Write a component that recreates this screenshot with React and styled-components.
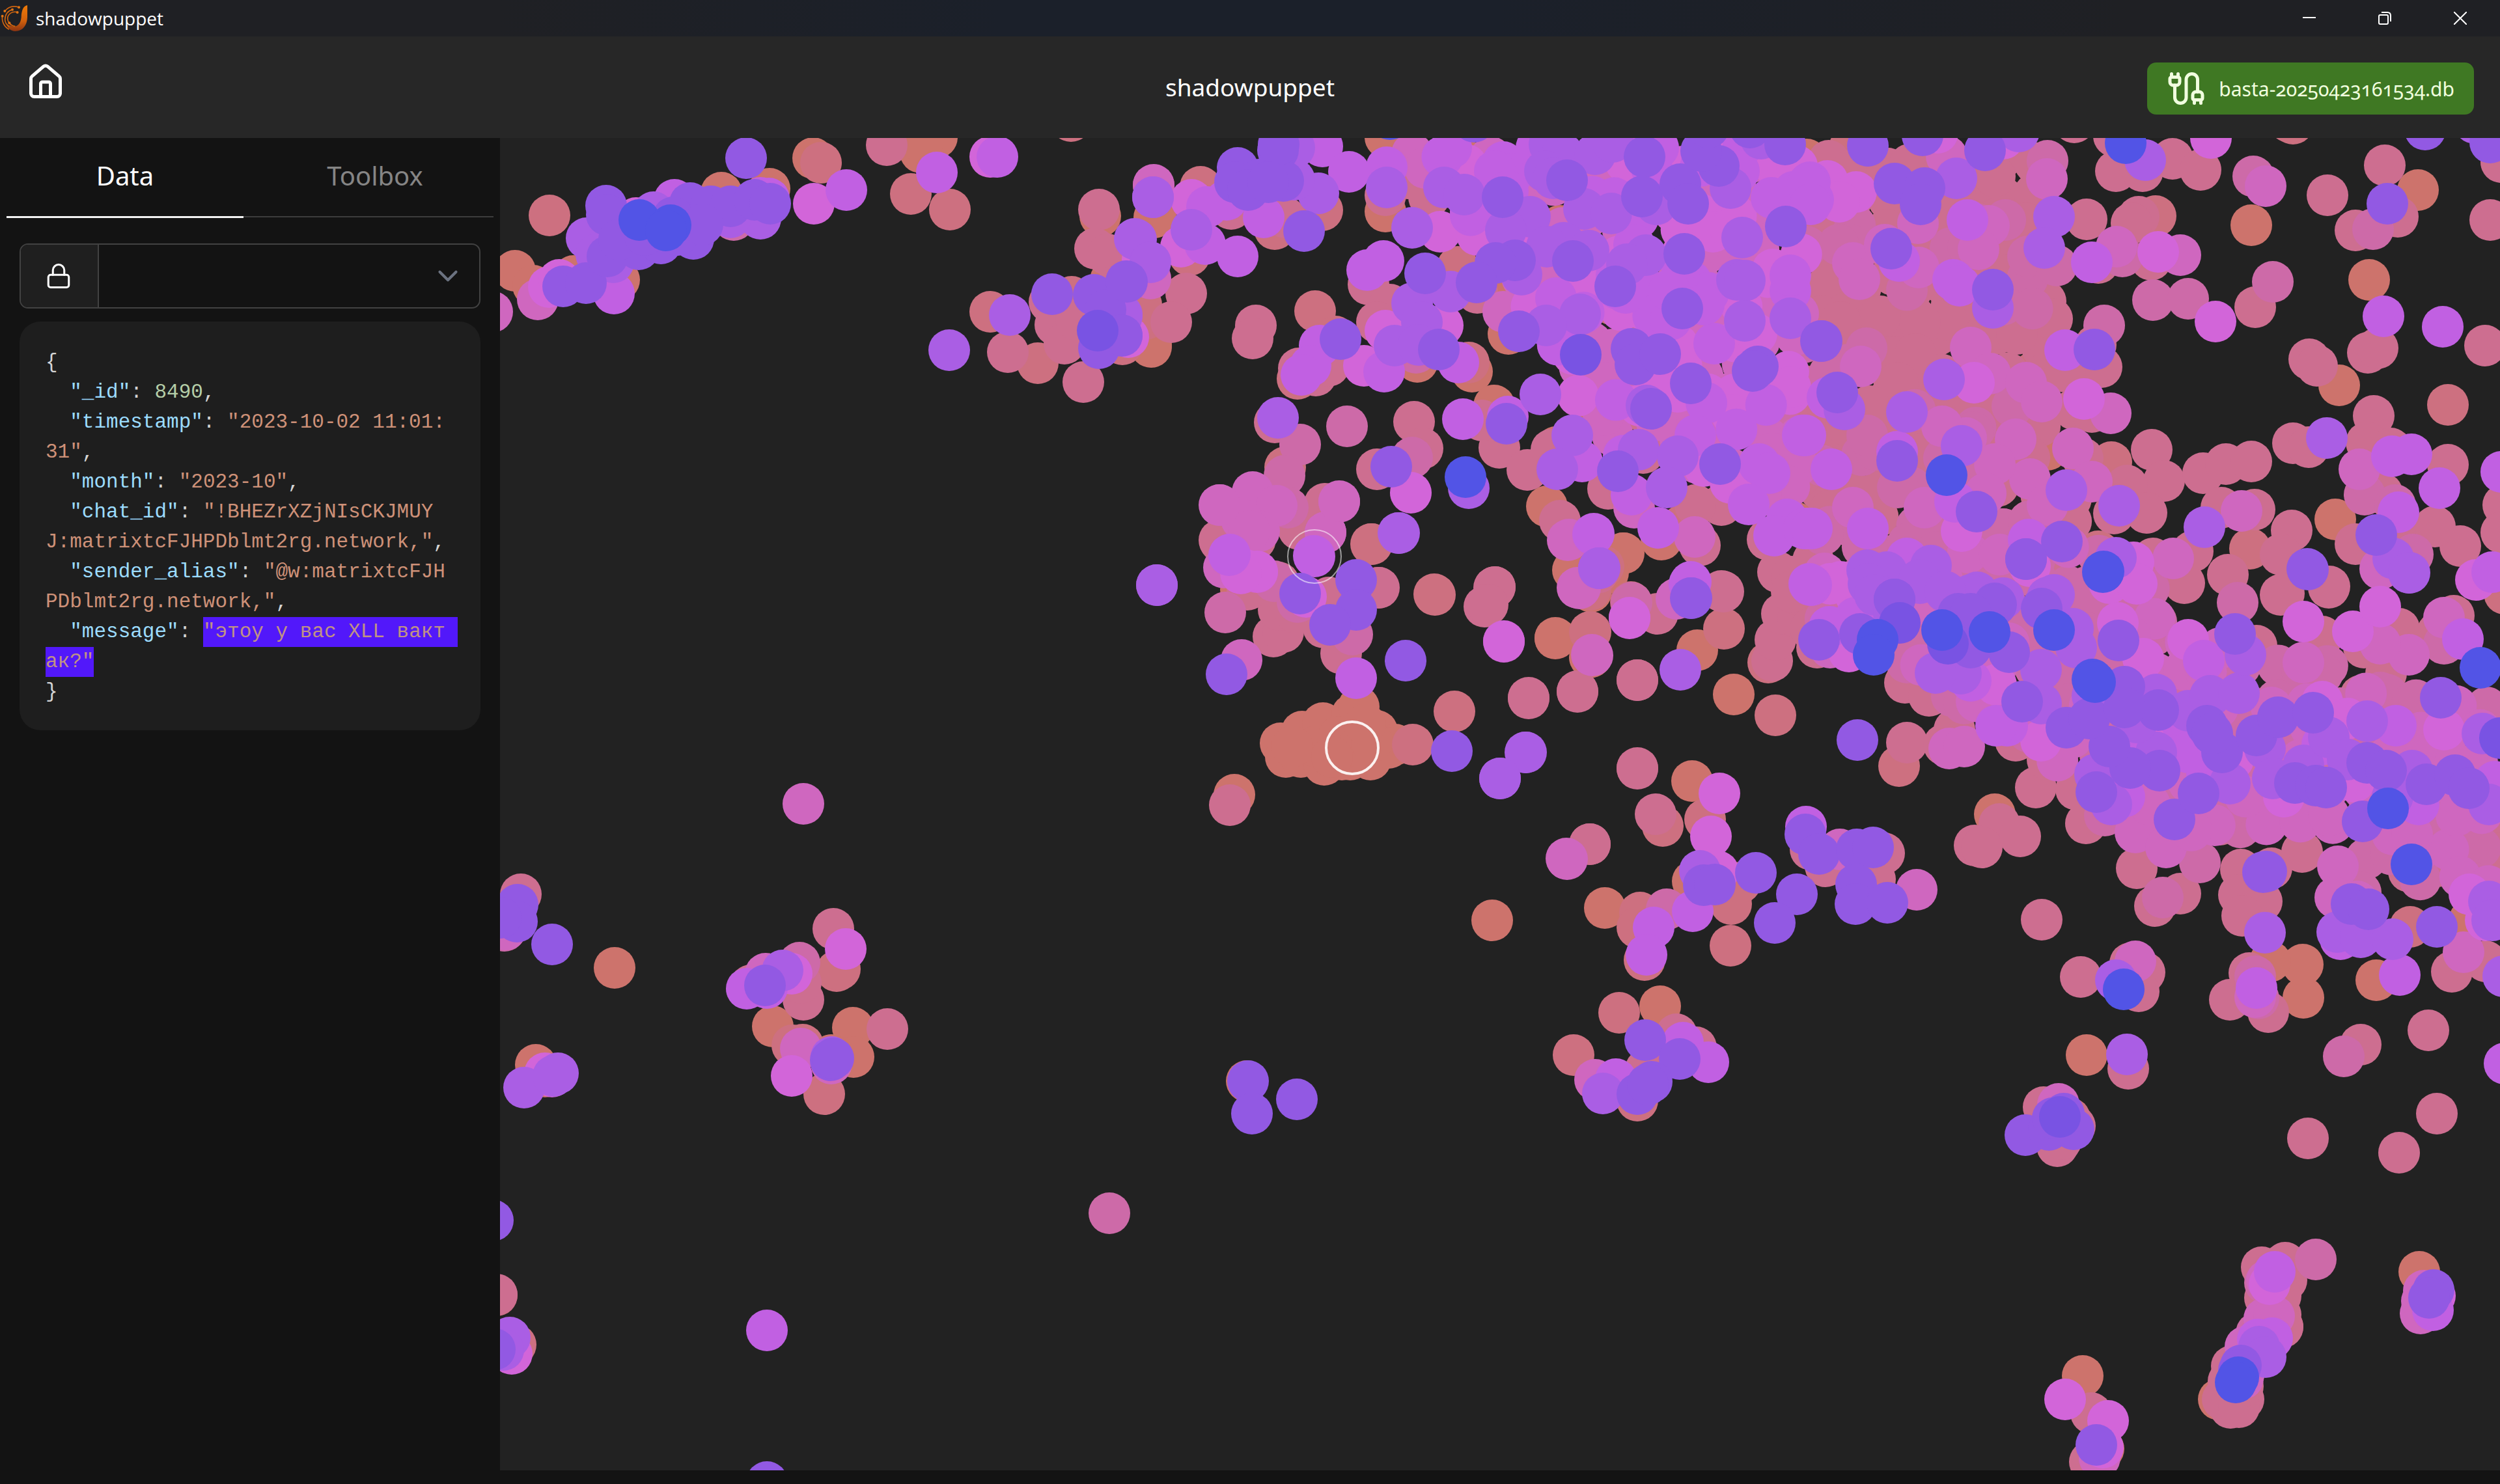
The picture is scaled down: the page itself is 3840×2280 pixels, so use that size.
import React from "react";
import styled, { createGlobalStyle } from "styled-components";
import { Cable, ChevronDown, House, Lock } from "lucide-react";

const GlobalStyle = createGlobalStyle`
  *, *::before, *::after { box-sizing: border-box; }
  html, body, #root { height: 100%; }
  body {
    margin: 0;
    background: #131313;
    color: #ffffff;
    font-family: "Noto Sans", "Open Sans", sans-serif;
  }
  button, select { font: inherit; color: inherit; }
`;

/* ---------- layout ---------- */

const Window = styled.div`
  display: flex;
  flex-direction: column;
  height: 100%;
`;

const TitleBar = styled.div`
  display: flex;
  align-items: center;
  height: 56px;
  padding-right: 3px;
  background: linear-gradient(90deg, #1f2024 20%, #1b202a 40%, #1b202a 60%, #1f2024 85%);
`;

const AppName = styled.span`
  flex: 1;
  padding-left: 10px;
  font-family: "Open Sans", "Noto Sans", sans-serif;
  font-size: 28px;
  line-height: 40px;
`;

const WindowButton = styled.button`
  display: grid;
  place-items: center;
  width: 116px;
  height: 56px;
  padding: 0;
  border: 0;
  background: none;
`;

const Header = styled.header`
  display: grid;
  grid-template-columns: 1fr auto 1fr;
  align-items: start;
  padding: 40px 40px 36px;
  background: #272727;
`;

const HomeButton = styled.button`
  display: flex;
  justify-self: start;
  padding: 0;
  border: 0;
  background: none;
`;

const Title = styled.h1`
  margin: 0;
  font-size: 37px;
  font-weight: 400;
  line-height: 76px;
`;

const DatabaseButton = styled.button`
  display: flex;
  align-items: center;
  justify-self: end;
  gap: 20px;
  height: 80px;
  padding: 0 30px;
  border: 0;
  border-radius: 14px;
  background: #3f7823;
  color: #f1ffdf;
  font-size: 30px;
  font-variant-numeric: oldstyle-nums;
`;

const Body = styled.div`
  display: flex;
  flex: 1;
  min-height: 0;
  padding-bottom: 21px;
`;

const Sidebar = styled.aside`
  flex: none;
  width: 768px;
  background: #131313;
`;

const TabList = styled.div`
  display: flex;
  gap: 20px;
  margin: 0 10px;
  border-bottom: 2px solid #3d3d3d;
`;

const Tab = styled.button`
  flex: 1;
  height: 123px;
  margin-bottom: -3px;
  padding: 0 0 6px;
  border: 0;
  border-bottom: 3px solid ${(p) => (p.$active ? "#f4f4f4" : "transparent")};
  background: none;
  color: ${(p) => (p.$active ? "#ffffff" : "#858585")};
  font-size: 40px;
`;

const TabPanel = styled.div`
  display: flex;
  flex-direction: column;
  gap: 20px;
  padding: 40px 30px;
`;

const FieldRow = styled.div`
  display: flex;
  height: 100px;
  border: 2px solid #424242;
  border-radius: 13px;
  overflow: hidden;
`;

const LockButton = styled.button`
  display: grid;
  place-items: center;
  width: 120px;
  padding: 0 2px 0 0;
  border: 0;
  border-right: 2px solid #424242;
  background: #1f1f1f;
`;

const SelectWrap = styled.label`
  display: grid;
  flex: 1;
  align-items: center;

  > * { grid-area: 1 / 1; }
  > svg {
    justify-self: end;
    margin-right: 23px;
    color: #6b7280;
    pointer-events: none;
  }
`;

const Select = styled.select`
  width: 100%;
  height: 100%;
  padding: 0 80px 0 24px;
  border: 0;
  background: transparent;
  appearance: none;
  font-size: 32px;
`;

const Record = styled.pre`
  margin: 0;
  padding: 40px 40px 36px;
  border-radius: 32px;
  background: #1e1e1e;
  color: #d4d4d4;
  font-family: "Liberation Mono", "DejaVu Sans Mono", monospace;
  font-size: 31px;
  line-height: 46px;
  overflow: hidden;
`;

const Key = styled.span`
  color: #9cdcfe;
`;

const NumberValue = styled.span`
  color: #b5cea8;
`;

const Text = styled.span`
  color: #ce9178;
`;

const MarkedText = styled.mark`
  display: inline-block;
  color: #c09384;
  background: #5218fa;
`;

const Plot = styled.main`
  flex: 1;
  min-width: 0;
  background: #222222;

  svg {
    display: block;
    width: 100%;
    height: 100%;
  }
`;

/* ---------- scatter data ---------- */

const LEVELS = [
  "#cd736c", "#cd7080", "#cd6e90", "#cd6aa8", "#cf67bf", "#d265d9",
  "#c160e2", "#aa5ee4", "#9259e3", "#7953e3", "#5254e6",
];

// Every chunk keeps its points in local units: origin (x, y) and units per pixel (sx, sy).
// rows[n] is the flat list of "x,y" pairs at colour level n.
const CHUNKS = [
  {
    x: 760, y: 200, sx: 1.568, sy: 2.613,
    rows: [
      "49,565 767,112 545,250 662,235 1025,90 1064,30 1030,50 190,585 92,625 1458,345 1484,600 1592,340 1580,870 300,600 510,360",
      "132,343 786,130 1002,255 1096,320 1193,730 1308,935 1512,860 1390,668 1387,-37",
      "944,60 1455,320 1446,475 1475,500 1336,690 1350,780 1372,856 1400,760 1235,890 1418,1010 1500,620",
      "576,360",
      "-7,730 104,680 1587,220",
      "130,630 155,600 340,352 768,295 1193,108 1525,830 1560,520",
      "287,657 433,280 1065,170 1210,108 847,240 640,272 660,275",
      "221,435 382,330 640,355 568,350 285,530 245,500 1095,883 1240,742 1545,440 1585,270 1510,740",
      "606,113 268,304 270,340 165,627 220,613 272,508 346,478 400,455 478,436 470,293 430,350 520,306 568,306 625,280 663,296 300,440 360,420 440,420 500,380 1342,658 1443,660 1523,610 1510,825 1455,876 1470,720",
      "1452,805",
      "348,360 423,382 412,402",
    ],
  },
  {
    x: 1740, y: 200, sx: 1.493, sy: 2.24,
    rows: [
      "42,740 580,280 653,797 778,830 862,700 828,948 950,1295 1125,1457 1213,1410 1010,1515 1070,760 1050,970 840,520 1250,700 580,25 980,330 50,300 1040,500 1545,100 970,1090 1520,1350 770,110",
      "155,195 418,622 325,340 435,275 130,430 20,600 378,855 692,1598 547,1424 745,470 770,800 1100,600 1540,880 465,710 350,1160 1230,1000 1080,1500 1180,150 1260,1360 30,650",
      "123,563 88,660 282,672 275,716 225,270 350,300 580,225 630,165 540,530 590,600 560,660 420,845 450,810 380,820 645,1003 665,1095 560,1167 841,1092 905,1170 960,1100 1090,1235 1160,960 980,1345 1350,1290 1455,1410 1480,1520 1560,1480 200,1415 280,1410 380,1370 440,1285 565,1575 830,1572 1350,1585 1530,1190 1170,1110 1290,1290 1300,1430 790,560 1500,960 680,230 1180,700 1110,930 1420,1000 800,1000 325,1005",
      "48,190 650,765 491,1020 384,1082 348,1190 640,1127 1545,400 1540,730 1130,350 1300,700 1500,1040 960,450 356,1300 1040,600",
      "640,80 670,130 850,625 1420,110 1060,190 1470,260 40,510 275,1245 200,1290 330,1293 290,1380 250,1340 474,1280 442,1385 1100,1050 1085,870 1000,1410 1288,1400 1020,1575 1150,1300 1200,1000 1400,640 1500,120 1350,1000 215,1500 1440,1250 1080,980",
      "110,400 135,240 705,350 790,360 1130,110 1170,615 1280,350 1330,350 1370,340 1468,480 1508,885 1380,910 1375,980 580,690 710,672 530,810 1021,915 637,1248 260,1515 285,1520 1010,770 1430,700 1250,740 1310,1155 1370,1215 1515,225 1250,900 1150,60 1240,280 1200,900",
      "435,55 495,143 583,128 730,60 300,300 215,240 170,265 165,392 240,434 850,110 870,150 775,280 830,140 860,210 925,60 1205,60 1400,50 1552,180 1560,240 1390,140 1130,560 1110,500 970,578 575,450 537,482 428,742 407,810 387,843 577,830 746,800 757,994 1150,395 1260,480 1280,520 1230,550 1320,560 1508,553 1333,735 1316,938 1290,1050 1125,1120 1536,1050 1144,1255 1056,1390 1205,1368 1437,1150 1460,1180 1412,1288 1500,1340 1470,1395 1540,1370 1280,1555 415,1466 222,1460 1555,1565 1030,1140 1310,600 1595,920 860,985",
      "47,231 135,342 5,375 40,455 -25,640 425,218 370,60 370,170 582,197 640,337 714,197 760,222 955,50 985,80 1060,82 945,140 965,165 1035,270 1098,287 1100,40 1200,255 1370,200 1440,30 910,298 855,345 988,388 950,400 1045,415 1177,430 1133,462 1398,370 1385,515 1403,517 1404,657 1508,648 1026,633 948,673 892,497 728,555 640,595 663,660 600,742 655,740 333,990 934,910 1008,1050 974,1168 1160,1100 1250,1123 1224,1230 610,1386 770,1232 1070,1508 55,1566 1178,948",
      "240,130 333,70 345,175 235,180 290,170 265,207 335,50 310,180 392,348 848,230 996,173 1174,92 1167,228 1256,186 1274,252 1343,124 1303,72 1415,-10 1496,50 1265,425 1010,450 877,448 832,458 788,525 670,492 1107,537 1260,613 885,692 476,718 701,755 1144,752 1152,807 1210,770 1433,812 1422,828 1279,872 1188,958 857,1010 592,1157 1113,1174 1346,1149 -15,520 -25,705 1498,331 1280,1610 783,-30 1578,725 1320,-10",
      "1027,772",
      "763,1195 590,-37",
    ],
  },
  {
    x: 2780, y: 200, sx: 1.479, sy: 2.24,
    rows: [
      "1381,205 1003,328 1271,516 1203,879 1193,1339 -5,890 460,305 540,1100",
      "785,295 1449,946 685,1143 1000,1440 655,1450 -5,575 60,600 510,830 90,60 1098,-22 1088,-30",
      "695,140 756,140 824,98 887,137 628,307 747,297 775,445 655,457 730,320 1306,122 1176,225 1240,345 1336,297 1545,310 1011,609 1134,788 1268,765 1290,750 1533,741 1281,983 1097,1078 1133,1090 1265,1075 1320,1095 1449,1152 777,1100 805,1208 893,1181 945,1149 1003,1141 1010,1307 935,1300 1095,1378 720,1222 765,1318 690,1320 1478,1431 1240,1425 1420,1365 1152,810 230,550 310,655 535,590 550,650 662,815 650,740 600,-28 250,660 160,640 70,660 75,800 190,780 240,770 200,870 135,950 270,380 60,340 110,380 510,220 380,180 330,210 420,160 490,320 450,500 600,960 640,970 780,1475 870,1450 950,1530 1070,1460 1180,1570 45,1310 150,1250 620,1130 1575,1290 1570,1385 1570,110 1070,1600 850,1560 560,1460 400,700 470,700 300,900 580,830 690,20 1330,1380 1300,1250",
      "540,105 780,584 860,580 1052,521 668,673 1007,158 128,750 65,395 495,435 560,465 710,435 150,1100 1280,340 1370,1460 30,1390 1260,1255 200,1230 370,1040 460,950 510,1480 130,1050 1330,1290",
      "538,168 98,458 112,512 247,472 407,330 383,410 697,400 842,430 366,748 410,838 115,812 491,868 527,935 684,975 467,1065 597,1095 640,1210 500,1200 826,1473 981,1311 1035,192 1248,1168 97,1300 260,1300 170,395 245,320 310,90 355,1060 540,1290 300,1020 1295,1510 420,1150 400,1250",
      "40,175 105,212 67,247 792,418 922,659 623,925 372,870 345,1380 735,1487 911,27 -8,1370 290,10 440,30 70,1555 680,1560 500,1500",
      "358,308 641,455 325,515 340,535 580,756 1303,641 1437,676 -5,185 2,255 203,450 5,1370 132,1370 49,1168 198,1107 497,1410 330,1280 1322,1122 1367,1115 1430,1232 1337,1315 1550,1520 220,1475 1,1565 -10,1050 40,920 -45,500 1571,1175",
      "762,102 333,165 475,5 554,299 533,405 415,612 304,859 220,969 345,1087 78,960 583,1238 703,1292 897,1367 1175,1059 1325,1475 1362,1523 1510,-25 695,1472 130,1515 175,1520 275,1498 380,1590 540,1608 250,1560 440,1610",
      "132,53 256,18 398,70 192,184 260,200 251,256 185,408 415,548 647,754 27,725 62,903 198,1137 378,1313 572,1415 491,1476 1312,253 1397,-2 1545,42 1287,1394 1131,1511 193,1615 420,1628",
      "",
      "718,45 310,1187 667,1518",
    ],
  },
  {
    x: 2300, y: 880, sx: 1.018, sy: 1.742,
    rows: [
      "91,175 313,207 370,326 304,557 168,897 -8,931 255,1161 921,1291 1374,1090 1260,1137 1259,1049 1208,1040 778,647 305,825 1520,930 147,50 147,225",
      "190,1177 119,1291 435,382 628,517 259,678 354,150 219,1413 145,158 325,660 223,910 219,950 365,886 364,998 1427,948 423,240 1575,55 230,1037 380,830",
      "49,335 125,318 219,287 219,523 247,647 145,727 640,455 785,672 746,730 757,735 817,705 851,928 912,1082 990,1045 1012,1070 1003,1120 1145,1143 1205,1175 1176,1072 1456,1224 1350,1263 986,1328 855,1432 880,1525 903,1480 1028,892 1068,858 1000,790 1190,660 842,575 920,670 1130,675 1163,795 1160,862 1195,880 1165,918 1258,748 1425,800 1470,785 1380,745 430,235 435,180 445,110 470,120 470,60 460,10 490,150 637,295 675,330 715,420 698,460 810,450 905,580 1210,790 1230,55 1300,40 1187,195 1410,150 1470,160 1350,330 1390,270 1540,700 1500,740 1545,1040 1492,1067 353,50 280,1235 232,1330 1495,115 513,785 605,750 590,820 490,740 860,500 1250,610 1546,640 1560,750 500,200 1355,200 -5,40 -20,90 250,110 1290,170 460,50 310,1270",
      "1323,1295 1040,870 1098,775 1157,80 1350,855 1030,130 1185,1080 265,900 1145,620 1190,1140 1380,320 1430,350 1480,190 1525,830 210,80 1290,270 640,240 730,350 950,650",
      "148,220 108,765 656,848 129,40 706,470 730,465 535,740 153,1357 998,1040 1185,1135 1314,785 1310,870 1511,1016 1425,220 1260,240 998,695 1045,735 1085,690 1300,650 1400,700 1430,700 1500,650 1210,360 990,170 877,1423 280,70 1480,120 1020,620 520,200 1345,880 1170,600 750,250 830,400 1380,190",
      "10,183 207,120 347,590 334,705 345,800 850,450 970,135 1010,230 1080,180 1260,130 1338,157 1380,90 1230,600 1290,345 1330,390 1480,420 1520,860 1545,930 1150,500 550,210 560,60 520,30 780,300 1060,440 1340,560 1530,20 1000,30",
      "488,30 519,145 483,680 244,950 233,1022 305,905 185,1355 290,1257 330,1310 1187,1112 1411,1076 1575,1314 797,410 780,410 1105,235 1405,410 1510,177 1318,980 980,600 1110,540 1070,400 1290,460 1420,580 1560,560 1080,480 990,480 560,120 740,290 300,30 1440,620",
      "44,481 4,550 286,260 159,-13 317,797 165,1393 984,1289 1200,964 967,1090 1313,962 1350,975 1400,981 1550,880 1556,930 1573,1080 580,30 590,60 660,20 740,60 870,60 900,150 905,200 850,260 725,270 685,268 850,350 1030,325 1080,370 1115,330 1160,323 1170,220 1200,470 1260,515 1300,440 1360,397 1330,500 1430,530 1540,430 1212,550 1145,565 960,620 935,540 1030,480 1400,600 1550,620 1425,0 1000,400 700,50 930,330 620,110",
      "303,68 503,180 567,163 563,448 482,700 503,752 562,740 587,735 561,835 560,887 610,884 468,860 434,937 404,803 323,837 340,835 231,1250 285,1301 241,1363 219,1395 235,1370 1197,802 1202,800 1336,886 1362,900 1469,948 937,587 1059,660 1096,590 1035,530 990,523 957,465 890,415 925,390 980,305 1033,367 980,360 1110,410 1133,480 1118,430 1187,436 1221,387 1276,375 1153,163 971,181 820,345 800,212 780,85 851,95 721,110 740,110 621,72 1475,334 1360,508 1390,530 1453,566 1497,542 1519,577 1247,563 1280,570 1296,575 1353,665 1266,-10 827,-37 740,200",
      "629,134 704,190 1568,443",
      "947,-2 595,180 588,220 695,154 770,158 870,154 930,286 935,292 1537,254 1393,631 1429,780 979,1115",
    ],
  },
  {
    x: 1740, y: 780, sx: 1.96, sy: 2.613,
    rows: [
      "445,945 510,900 573,865 660,830 680,800 735,895 790,950 460,1000 505,1002 576,1033 630,1010 655,1010 716,1012 770,965 550,960 620,920 680,960 480,960 600,1000 720,940 305,1153 1273,524 1475,184 1330,250 1430,260 1376,600 700,870 325,330",
      "909,350 969,818 842,952 720,146 1378,498 1500,380 1378,330",
      "423,518 452,498 440,410 575,480 628,585 738,321 1089,318 1068,390 1192,765 1338,738 1519,692 1519,1047 1376,1352 292,1195 440,300 345,330 260,130 500,85 590,360 1400,260 490,420",
      "278,420 660,510 425,295 495,380",
      "328,612 1384,592 1307,1410 1310,130 1345,323 275,240 350,95 580,100 622,-25 260,-10",
      "375,257 325,265 522,358 1118,537 1496,444",
      "291,190 546,195 672,684 1388,105",
      "72,312 800,101 1183,983 1106,1086 1404,244",
      "503,344 673,291 673,410 593,470 822,614 282,669 960,978",
    ],
  },
  {
    x: 760, y: 1160, sx: 1.17, sy: 1.4,
    rows: [
      "215,458 500,584 643,586 645,650 74,666 1351,702 90,692 605,645",
      "614,465 592,729 620,460 553,623 37,1268 535,625 3,1162",
      "47,299 608,374 705,589 554,526 3,1160 550,490 460,495",
      "1104,986 548,447 17,378",
      "554,105 550,632 487,470 605,663 20,375",
      "631,417 534,470 533,690 103,692 30,1288 90,685",
      "453,502 489,1238 489,501",
      "53,715 113,685 105,690 517,463 27,1253 15,1280 605,650",
      "103,407 41,322 40,358 10,350 485,495 604,656 608,652 1354,702 1361,771 1442,741 -3,1001 489,1564 0,1278",
    ],
  },
  {
    x: 3000, y: 1640, sx: 1.867, sy: 2.45,
    rows: [
      "372,1161 1336,770 762,1250 432,1435 885,1030 335,215",
      "335,190 945,975 880,1020",
      "885,753 953,735 955,800 894,868 940,930 945,978 800,1125 790,1180 773,1250 833,1250 795,1282 820,1278 830,1200 396,1300 393,1485 259,150 299,297 312,270 1018,266 1278,321 1388,175 940,860 915,1000",
      "1040,722 895,810 870,1000",
      "838,1050 893,945 920,935 302,138 1340,925 1345,880 1350,840 420,1470 830,1170 835,1150 900,800",
      "321,1250 445,1330 908,815 430,1430 1382,860",
      "922,769 873,1023 915,1018 1376,915",
      "878,1050 897,1090",
      "208,255 275,235 285,190 318,175 345,233 825,1123 820,1140 411,1422 1378,838 1365,868",
      "307,186",
      "818,1165 811,1185",
    ],
  },
];

// Outlines of the crowded parts of the cloud, filled with an even spread of low-level points.
const CROWDS = [
  { levels: [4, 5, 4, 6], outline: [[2150, 212], [2780, 212], [2780, 800], [2680, 780], [2460, 600], [2330, 480]] },
  { levels: [2, 3, 2, 2], outline: [[2780, 212], [3130, 212], [3140, 560], [3200, 780], [3120, 900], [2780, 820]] },
  { levels: [4, 3, 4, 3], outline: [[2740, 850], [3130, 780], [3400, 960], [3840, 1090], [3840, 1400], [3540, 1290], [3330, 1270], [3130, 1160], [2940, 1060], [2780, 960]] },
];

function inside([px, py], outline) {
  let hit = false;
  outline.forEach(([ax, ay], i) => {
    const [bx, by] = outline[(i + 1) % outline.length];
    if (ay > py !== by > py && px < ((bx - ax) * (py - ay)) / (by - ay) + ax) hit = !hit;
  });
  return hit;
}

function crowdPoints({ levels, outline }) {
  const points = [];
  let seed = 7;
  const next = () => (seed = (seed * 16807) % 2147483647) / 2147483647;
  for (let y = 190; y < 1500; y += 46) {
    for (let x = 2100; x < 3880; x += 46) {
      const point = [x + next() * 26, y + next() * 26];
      const level = levels[Math.floor(next() * levels.length)];
      if (inside(point, outline)) points.push({ x: point[0], y: point[1], level });
    }
  }
  return points;
}

function chunkPoints({ x, y, sx, sy, rows }) {
  return rows.flatMap((row, level) =>
    row.split(" ").filter(Boolean).map((pair) => {
      const [u, v] = pair.split(",").map(Number);
      return { x: Math.round(x + u / sx), y: Math.round(y + v / sy), level };
    })
  );
}

const POINTS = [...CROWDS.flatMap(crowdPoints), ...CHUNKS.flatMap(chunkPoints)].sort(
  (a, b) => a.level - b.level
);

/* ---------- drawings ---------- */

function Logo() {
  return (
    <svg width="45" height="56" viewBox="0 0 135 168" aria-hidden="true">
      <defs>
        <linearGradient id="flame" x1="0" y1="0" x2="0" y2="1">
          <stop offset="0" stopColor="#ee7a08" />
          <stop offset="0.6" stopColor="#d0600c" />
          <stop offset="1" stopColor="#8a3412" />
        </linearGradient>
      </defs>
      <path d="M126 24 C106 28 99 50 98 80 C95 108 82 122 62 122 C46 120 36 114 28 106 C34 130 50 144 70 144 C104 144 126 118 126 76 Z" fill="url(#flame)" />
      <g fill="none" stroke="#cf6410" strokeWidth="5">
        <path d="M86 33 C56 24 34 36 22 52" />
        <path d="M58 44 C36 50 24 66 23 90 C23 102 30 114 42 124" />
        <path d="M79 56 C54 50 36 66 35 84 C35 98 41 108 52 116" />
        <path d="M11 74 C7 100 20 124 42 136" />
        <path d="M43 105 C50 116 58 120 70 121" />
      </g>
      <g fill="#e07414">
        <circle cx="87" cy="34" r="6" />
        <circle cx="22" cy="51" r="6" />
        <circle cx="57" cy="44" r="6" />
        <circle cx="80" cy="57" r="6" />
        <circle cx="11" cy="74" r="6" />
        <circle cx="43" cy="106" r="6" />
      </g>
    </svg>
  );
}

const WINDOW_CONTROLS = [
  { label: "Minimize", d: "M0 9H20" },
  { label: "Restore", d: "M3 5H13Q15 5 15 7V17Q15 19 13 19H3Q1 19 1 17V7Q1 5 3 5ZM5 1H14Q19 1 19 6V15" },
  { label: "Close", d: "M0 0L20 20M20 0L0 20" },
];

function Scatter() {
  return (
    <svg viewBox="768 212 3072 2047" preserveAspectRatio="xMinYMin slice" role="img" aria-label="Message map">
      {POINTS.map((p, i) => (
        <circle key={i} cx={p.x} cy={p.y} r="32" fill={LEVELS[p.level]} />
      ))}
      <circle cx="2019" cy="855" r="41" fill="none" stroke="#ffffff" strokeOpacity="0.55" strokeWidth="2" />
      <circle cx="2077" cy="1149" r="40" fill="none" stroke="#fbf1f0" strokeWidth="4" />
    </svg>
  );
}

/* ---------- record ---------- */

function RecordView() {
  return (
    <Record>
      <div>{"{"}</div>
      <div>{"  "}<Key>"_id"</Key>: <NumberValue>8490</NumberValue>,</div>
      <div>{"  "}<Key>"timestamp"</Key>: <Text>"2023-10-02 11:01:</Text></div>
      <div><Text>31"</Text>,</div>
      <div>{"  "}<Key>"month"</Key>: <Text>"2023-10"</Text>,</div>
      <div>{"  "}<Key>"chat_id"</Key>: <Text>"!BHEZrXZjNIsCKJMUY</Text></div>
      <div><Text>J:matrixtcFJHPDblmt2rg.network,"</Text>,</div>
      <div>{"  "}<Key>"sender_alias"</Key>: <Text>"@w:matrixtcFJH</Text></div>
      <div><Text>PDblmt2rg.network,"</Text>,</div>
      <div>{"  "}<Key>"message"</Key>: <MarkedText>{'"этоу у вас XLL вакт '}</MarkedText></div>
      <div><MarkedText>ак?"</MarkedText></div>
      <div>{"}"}</div>
    </Record>
  );
}

export default function App() {
  return (
    <Window>
      <GlobalStyle />
      <TitleBar>
        <Logo />
        <AppName>shadowpuppet</AppName>
        {WINDOW_CONTROLS.map(({ label, d }) => (
          <WindowButton key={label} aria-label={label}>
            <svg width="20" height="20" fill="none" stroke="#ffffff" strokeWidth="2">
              <path d={d} />
            </svg>
          </WindowButton>
        ))}
      </TitleBar>
      <Header>
        <HomeButton aria-label="Home">
          <House size={60} />
        </HomeButton>
        <Title>shadowpuppet</Title>
        <DatabaseButton>
          <Cable size={60} />
          basta-20250423161534.db
        </DatabaseButton>
      </Header>
      <Body>
        <Sidebar>
          <TabList role="tablist">
            <Tab role="tab" aria-selected="true" $active>Data</Tab>
            <Tab role="tab" aria-selected="false">Toolbox</Tab>
          </TabList>
          <TabPanel role="tabpanel">
            <FieldRow>
              <LockButton aria-label="Lock field">
                <Lock size={42} strokeWidth={1.75} />
              </LockButton>
              <SelectWrap>
                <Select aria-label="Field" defaultValue="">
                  <option value="" />
                </Select>
                <ChevronDown size={50} />
              </SelectWrap>
            </FieldRow>
            <RecordView />
          </TabPanel>
        </Sidebar>
        <Plot>
          <Scatter />
        </Plot>
      </Body>
    </Window>
  );
}
